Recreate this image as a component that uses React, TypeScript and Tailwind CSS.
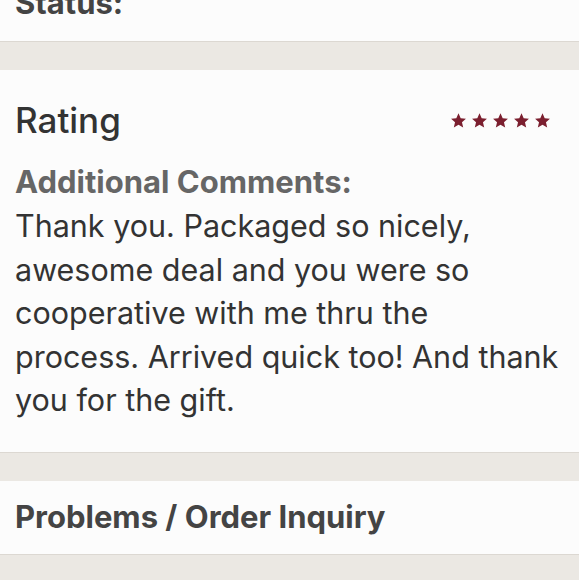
import React from 'react';

const Star = () => (
  <svg viewBox="0 0 24 24" className="w-[17px] h-[17px]" fill="#7b1f2f">
    <path d="M12 1.8l3.1 6.9 7.4.7-5.6 5 1.7 7.4L12 17.9l-6.6 3.9 1.7-7.4-5.6-5 7.4-.7z" />
  </svg>
);

const comment = [
  'Thank you. Packaged so nicely,',
  'awesome deal and you were so',
  'cooperative with me thru the',
  'process. Arrived quick too! And thank',
  'you for the gift.',
];

export default function App() {
  return (
    <div
      className="w-[579px] h-[580px] overflow-hidden bg-[#ebe8e3]"
      style={{ fontFamily: 'Inter, "Noto Sans", sans-serif' }}
    >
      {/* status card, cut off at top */}
      <div className="bg-[#fcfcfc] border-b border-[#dcd8d2] px-[15px] pb-[16px]">
        <div className="-mt-[19px] text-[31px] leading-[44px] font-bold text-[#444]">Status:</div>
      </div>

      <div className="h-[28px]" />

      {/* rating card */}
      <div className="bg-[#fcfcfc] border-b border-[#dcd8d2] px-[15px] pt-[30px] pb-[30px]">
        <div className="flex items-center justify-between">
          <h2 className="text-[35px] leading-[40px] font-medium text-[#333]">Rating</h2>
          <div className="flex gap-[4px] mr-[13px]">
            <Star />
            <Star />
            <Star />
            <Star />
            <Star />
          </div>
        </div>
        <div className="mt-[20px] text-[31px] leading-[44px] font-bold text-[#666]">Additional Comments:</div>
        <p className="text-[30.5px] leading-[43.5px] text-[#333]">
          {comment.map((line, i) => (
            <span key={i} className="block whitespace-nowrap">
              {line}
            </span>
          ))}
        </p>
      </div>

      <div className="h-[28px]" />

      {/* problems card */}
      <div className="bg-[#fcfcfc] border-b border-[#dcd8d2] px-[15px] pt-[14px] pb-[15px]">
        <div className="text-[31px] leading-[44px] font-bold text-[#444]">Problems / Order Inquiry</div>
      </div>
    </div>
  );
}
